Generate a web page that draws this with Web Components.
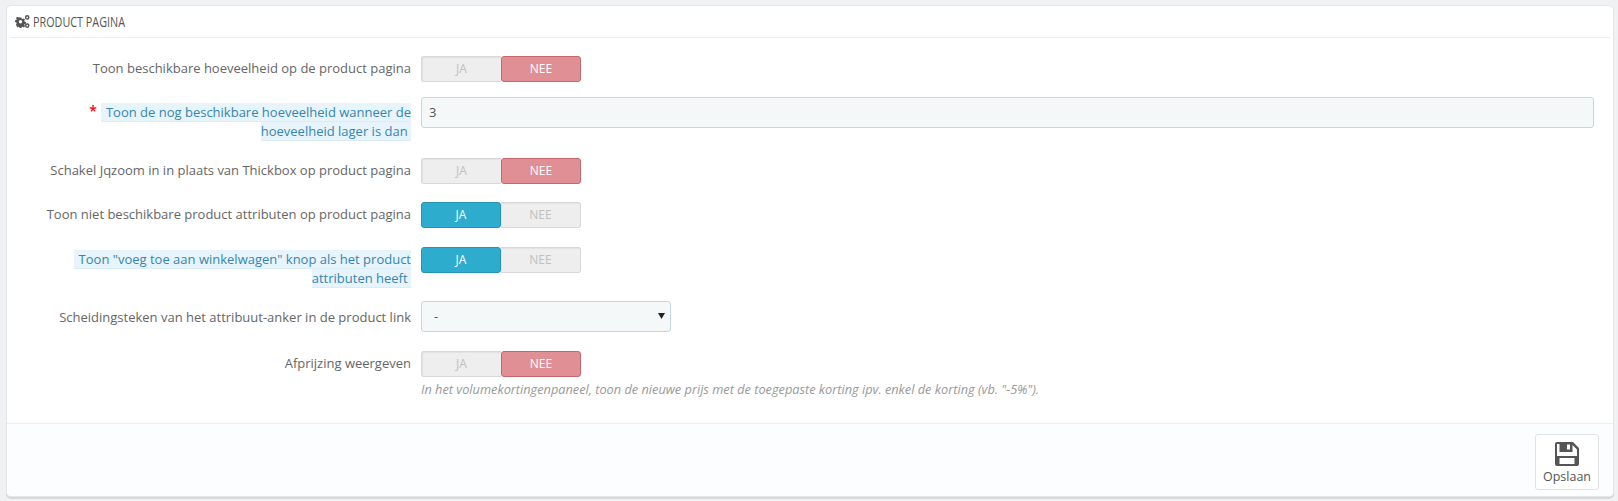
<!DOCTYPE html>
<html>
<head>
<meta charset="utf-8">
<title>Product pagina</title>
<style>
  html, body { margin: 0; height: 100%; }
  body { background: #eff1f2; font-family: "Open Sans", sans-serif; font-size: 13px; color: #555; overflow: hidden; }
</style>
</head>
<body>
<config-panel heading="PRODUCT PAGINA">
  <form-row label="Toon beschikbare hoeveelheid op de product pagina" gap="15" pad="3"><yes-no value="no"></yes-no></form-row>
  <form-row required hint gap="17" pad="6">
    <span slot="label">Toon de nog beschikbare hoeveelheid wanneer de hoeveelheid lager is dan&nbsp;</span>
    <text-field value="3"></text-field>
  </form-row>
  <form-row label="Schakel Jqzoom in in plaats van Thickbox op product pagina" gap="18" pad="3"><yes-no value="no"></yes-no></form-row>
  <form-row label="Toon niet beschikbare product attributen op product pagina" gap="19" pad="3"><yes-no value="yes"></yes-no></form-row>
  <form-row hint gap="13" pad="3">
    <span slot="label">Toon "voeg toe aan winkelwagen" knop als het product attributen heeft&nbsp;</span>
    <yes-no value="yes"></yes-no>
  </form-row>
  <form-row label="Scheidingsteken van het attribuut-anker in de product link" gap="19" pad="7"><select-field value="-"></select-field></form-row>
  <form-row label="Afprijzing weergeven" gap="0" pad="3">
    <yes-no value="no"></yes-no>
    <p class="help" slot="help">In het volumekortingenpaneel, toon de nieuwe prijs met de toegepaste korting ipv. enkel de korting (vb. "-5%").</p>
  </form-row>
  <save-button slot="footer">Opslaan</save-button>
</config-panel>

<script>
// panel with heading, body and grey footer
class ConfigPanel extends HTMLElement {
  constructor() {
    super();
    this.attachShadow({ mode: 'open' });
    this.shadowRoot.innerHTML = `
      <style>
        :host { display: block; margin: 5px 4px 0 6px; background: #fff; border: 1px solid #e6e6e6; border-radius: 5px; box-shadow: 0 2px 0 rgba(0,0,0,.1); box-sizing: border-box; height: 492px; overflow: hidden; }
        .wrap { display: flex; flex-direction: column; height: 100%; }
        header { margin: 0 3px; height: 31px; flex: none; border-bottom: 1px solid #eee; display: flex; align-items: center; padding: 0 0 0 5px; color: #555; }
        header svg { width: 15px; height: 13px; margin-right: 3px; flex: none; }
        h3 { margin: 0; font-size: 14.5px; font-weight: 500; line-height: 18px; white-space: nowrap; transform: scaleX(.745); transform-origin: left center; }
        main { flex: 1; padding-top: 18px; min-height: 0; }
        footer { height: 73px; flex: none; box-sizing: border-box; background: #fcfdfe; border-top: 1px solid #eee; display: flex; justify-content: flex-end; padding: 10px 14px 0 0; }
      </style>
      <div class="wrap">
        <header>
          <svg viewBox="0 0 15 13" aria-hidden="true"><path fill="#555" fill-rule="evenodd" d="M4.6 2.4h1.8l.3 1.3.9.4 1.2-.7 1.2 1.2-.7 1.2.4.9 1.3.3v1.8l-1.3.3-.4.9.7 1.2-1.2 1.2-1.2-.7-.9.4-.3 1.3H4.6l-.3-1.3-.9-.4-1.2.7L1 9.5l.7-1.2-.4-.9L0 7.1V5.3l1.3-.3.4-.9L1 2.9l1.2-1.2 1.2.7.9-.4zM5.5 5a1.7 1.7 0 1 0 0 3.4A1.7 1.7 0 0 0 5.5 5z"/><path fill="none" stroke="#555" stroke-width="1.5" d="M12.2.8a1.6 1.6 0 1 0 0 3.2 1.6 1.6 0 0 0 0-3.2zM12.2 9a1.6 1.6 0 1 0 0 3.2 1.6 1.6 0 0 0 0-3.2z"/></svg>
          <h3></h3>
        </header>
        <main><slot></slot></main>
        <footer><slot name="footer"></slot></footer>
      </div>`;
  }
  connectedCallback() {
    this.shadowRoot.querySelector('h3').textContent = this.getAttribute('heading') || '';
  }
}

// label column + control column
class FormRow extends HTMLElement {
  constructor() {
    super();
    this.attachShadow({ mode: 'open' });
    this.shadowRoot.innerHTML = `
      <style>
        :host { display: grid; grid-template-columns: 384px 1fr; column-gap: 10px; padding-left: 20px; margin-bottom: var(--gap, 15px); align-items: start; }
        .label { text-align: right; line-height: 19px; color: #666; padding-top: var(--pad, 3px); }
        :host([hint]) .txt { color: #3586ae; background: #e8f4fb; border-bottom: 1px solid #d9edf7; padding-left: 5px; }
        :host([required]) .label::before { content: "*"; color: #f00; font-size: 14px; font-weight: 600; margin-right: 4px; line-height: 10px; vertical-align: 1px; }
        .ctl { display: flex; flex-direction: column; min-width: 0; padding-right: 19px; }
        ::slotted(.help) { margin: 5px 0 0; font-size: 12.75px; line-height: 15px; font-style: italic; color: #999; }
      </style>
      <div class="label"><span class="txt"><slot name="label"></slot></span></div>
      <div class="ctl"><slot></slot><slot name="help"></slot></div>`;
  }
  connectedCallback() {
    const label = this.getAttribute('label');
    if (label) this.shadowRoot.querySelector('slot[name=label]').textContent = label;
    this.style.setProperty('--gap', (this.getAttribute('gap') || 15) + 'px');
    this.style.setProperty('--pad', (this.getAttribute('pad') || 3) + 'px');
  }
}

// JA / NEE toggle
class YesNo extends HTMLElement {
  constructor() {
    super();
    this.attachShadow({ mode: 'open' });
    this.shadowRoot.innerHTML = `
      <style>
        :host { display: flex; width: 160px; height: 26px; font-size: 12px; }
        span { width: 80px; height: 26px; box-sizing: border-box; text-align: center; line-height: 23px; color: #c0c0c0; background: #eee; border: 1px solid #d8d8d8; box-shadow: inset 1px 1px 1px rgba(0,0,0,.05); }
        .yes { border-radius: 3px 0 0 3px; border-right: 0; }
        .no { border-radius: 0 3px 3px 0; border-left: 0; }
        .yes.on { background: #2eacce; border: 1px solid #2795b2; border-radius: 3px; color: #fff; box-shadow: none; }
        .no.on { background: #e08f95; border: 1px solid #c8666e; border-radius: 3px; color: #fff; box-shadow: none; }
      </style>
      <span class="yes">JA</span><span class="no">NEE</span>`;
  }
  connectedCallback() {
    const on = this.getAttribute('value') === 'yes' ? '.yes' : '.no';
    this.shadowRoot.querySelector(on).classList.add('on');
  }
}

class TextField extends HTMLElement {
  constructor() {
    super();
    this.attachShadow({ mode: 'open' });
    this.shadowRoot.innerHTML = `
      <style>
        :host { display: block; height: 31px; box-sizing: border-box; background: #f5f8f9; border: 1px solid #c7d6db; border-radius: 3px; padding: 0 7px; line-height: 29px; color: #555; }
      </style>
      <span></span>`;
  }
  connectedCallback() { this.shadowRoot.querySelector('span').textContent = this.getAttribute('value'); }
}

class SelectField extends HTMLElement {
  constructor() {
    super();
    this.attachShadow({ mode: 'open' });
    this.shadowRoot.innerHTML = `
      <style>
        :host { display: flex; justify-content: space-between; width: 250px; height: 31px; box-sizing: border-box; background: #f5f8f9; border: 1px solid #c7d6db; border-radius: 3px; padding: 0 5px 0 12px; line-height: 29px; color: #555; }
        svg { width: 7px; height: 6px; margin-top: 11px; }
      </style>
      <span></span><svg viewBox="0 0 7 6" aria-hidden="true"><path d="M0 0h7L3.5 6z" fill="#222"/></svg>`;
  }
  connectedCallback() { this.shadowRoot.querySelector('span').textContent = this.getAttribute('value'); }
}

class SaveButton extends HTMLElement {
  constructor() {
    super();
    this.attachShadow({ mode: 'open' });
    this.shadowRoot.innerHTML = `
      <style>
        :host { display: flex; flex-direction: column; align-items: center; width: 64px; height: 56px; box-sizing: border-box; background: #fff; border: 1px solid #dfe3e5; border-radius: 3px; padding-top: 7px; font-size: 12.5px; color: #555; }
        svg { width: 24px; height: 24px; display: block; flex: none; }
        span { line-height: 16px; margin-top: 3px; }
      </style>
      <svg viewBox="0 0 24 24" aria-hidden="true"><path fill="#555" fill-rule="evenodd" d="M2 0H18L24 6V22a2 2 0 0 1-2 2H2a2 2 0 0 1-2-2V2a2 2 0 0 1 2-2zM2 2H4.5V10H17.5V3L22 7.5V14H2zM12 2.5H15V7.5H12zM4.5 16H19.5V22H4.5z"/></svg>
      <span><slot></slot></span>`;
  }
}

customElements.define('config-panel', ConfigPanel);
customElements.define('form-row', FormRow);
customElements.define('yes-no', YesNo);
customElements.define('text-field', TextField);
customElements.define('select-field', SelectField);
customElements.define('save-button', SaveButton);
</script>
</body>
</html>
